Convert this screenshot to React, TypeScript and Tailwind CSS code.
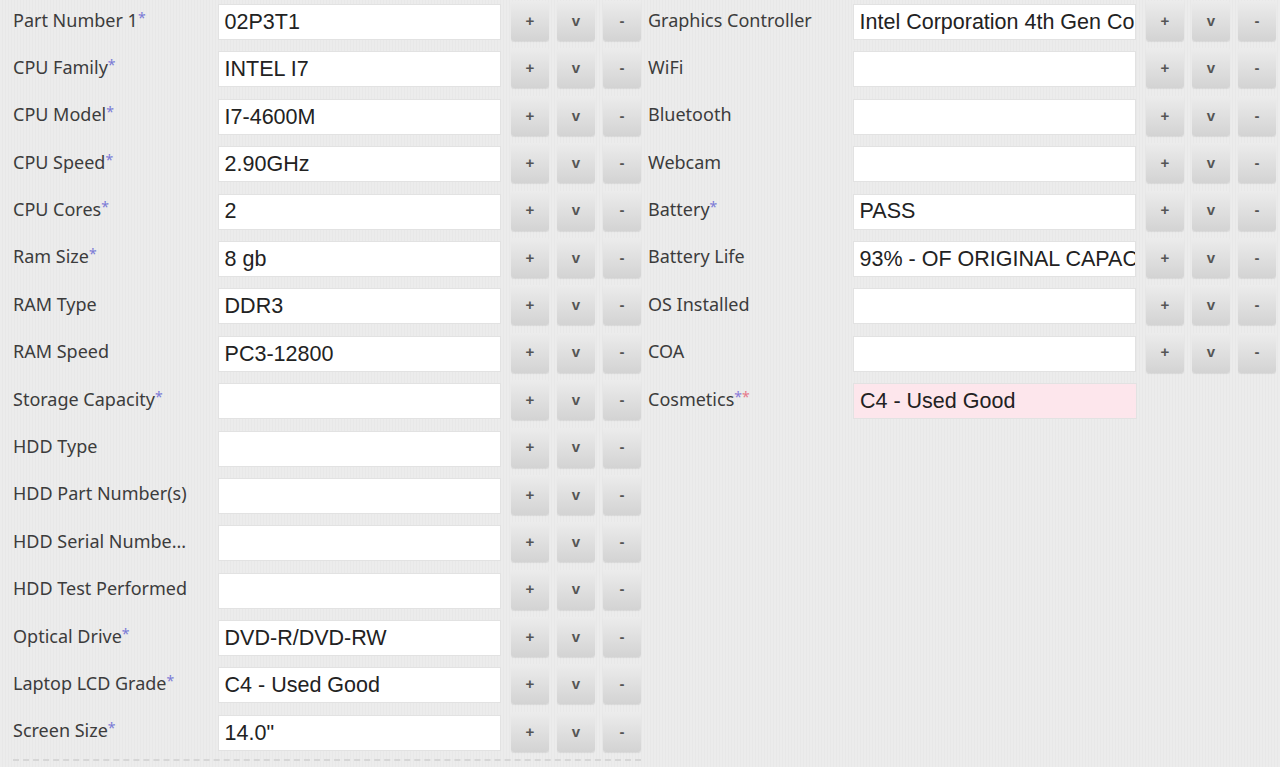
import React from 'react';

type Field = {
  label: string;
  value?: string;
  req?: 0 | 1 | 2;
  pink?: boolean;
  noButtons?: boolean;
};

const leftFields: Field[] = [
  { label: 'Part Number 1', value: '02P3T1', req: 1 },
  { label: 'CPU Family', value: 'INTEL I7', req: 1 },
  { label: 'CPU Model', value: 'I7-4600M', req: 1 },
  { label: 'CPU Speed', value: '2.90GHz', req: 1 },
  { label: 'CPU Cores', value: '2', req: 1 },
  { label: 'Ram Size', value: '8 gb', req: 1 },
  { label: 'RAM Type', value: 'DDR3' },
  { label: 'RAM Speed', value: 'PC3-12800' },
  { label: 'Storage Capacity', req: 1 },
  { label: 'HDD Type' },
  { label: 'HDD Part Number(s)' },
  { label: 'HDD Serial Numbe...' },
  { label: 'HDD Test Performed' },
  { label: 'Optical Drive', value: 'DVD-R/DVD-RW', req: 1 },
  { label: 'Laptop LCD Grade', value: 'C4 - Used Good', req: 1 },
  { label: 'Screen Size', value: '14.0"', req: 1 },
];

const rightFields: Field[] = [
  { label: 'Graphics Controller', value: 'Intel Corporation 4th Gen Core Processor Integrated Graphics' },
  { label: 'WiFi' },
  { label: 'Bluetooth' },
  { label: 'Webcam' },
  { label: 'Battery', value: 'PASS', req: 1 },
  { label: 'Battery Life', value: '93% - OF ORIGINAL CAPACITY' },
  { label: 'OS Installed' },
  { label: 'COA' },
  { label: 'Cosmetics', value: 'C4 - Used Good', req: 2, pink: true, noButtons: true },
];

const StepButton: React.FC<{ text: string }> = ({ text }) => (
  <button className="w-[38px] h-[40px] rounded-[3px] bg-gradient-to-b from-[#ececec] to-[#d3d3d3] shadow-[0_1px_1px_rgba(0,0,0,0.08)] text-[#555] text-[15px] font-bold font-['Liberation_Sans',sans-serif] flex items-center justify-center">
    {text}
  </button>
);

const FieldRow: React.FC<{ field: Field }> = ({ field }) => (
  <div className="h-[47.4px] flex items-start">
    <div className="w-[205px] pt-[10px] pr-[12px] text-[18px] text-[#3c3c3c] whitespace-nowrap overflow-hidden">
      {field.label}
      {field.req === 1 && <span className="text-[#7a7ad6] text-[14px] align-top">*</span>}
      {field.req === 2 && (
        <span className="text-[14px] align-top">
          <span className="text-[#8a7ad8]">*</span>
          <span className="text-[#e67a8a]">*</span>
        </span>
      )}
    </div>
    <div
      className={`mt-[7.5px] w-[284px] h-[36px] border border-[#e2e2e2] px-[6px] flex items-center overflow-hidden whitespace-nowrap text-[21.5px] text-[#222] font-['Liberation_Sans',Arial,sans-serif] ${
        field.pink ? 'bg-[#fde6ec]' : 'bg-white'
      }`}
    >
      <span className="whitespace-nowrap">{field.value}</span>
    </div>
    {!field.noButtons && (
      <div className="ml-[10px] mt-[4.5px] flex gap-[8px]">
        <StepButton text="+" />
        <StepButton text="v" />
        <StepButton text="-" />
      </div>
    )}
  </div>
);

export default function App() {
  return (
    <div className="w-[1280px] h-[767px] overflow-hidden bg-[#ebebeb] bg-[repeating-linear-gradient(90deg,#ececec_0px,#ececec_2px,#e8e8e8_2px,#e8e8e8_3px)] font-['Noto_Sans',sans-serif]">
      <div className="-mt-[3.5px] pl-[13px] flex gap-[7px]">
        <div className="w-[628px]">
          {leftFields.map((f) => (
            <FieldRow key={f.label} field={f} />
          ))}
          <div className="mt-[4px] border-t-2 border-dashed border-[#d6d6d6]" />
        </div>
        <div className="w-[628px]">
          {rightFields.map((f) => (
            <FieldRow key={f.label} field={f} />
          ))}
        </div>
      </div>
    </div>
  );
}
